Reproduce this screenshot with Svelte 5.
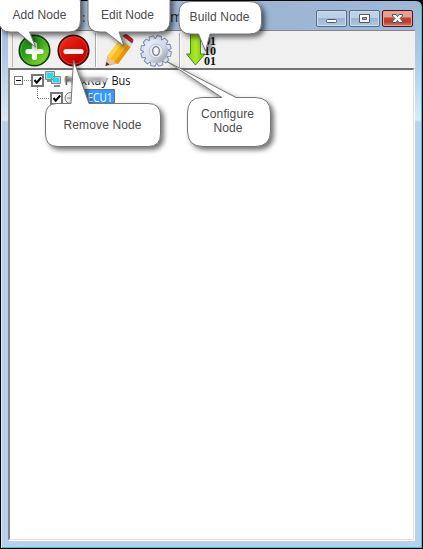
<script>
  const callouts = [
    { d: 'M-2 -10H69Q80.500 -10 80.500 2V20Q80.500 32 69 32H29.500L35.500 47L18 32H10Q-1 32 -1 20V-10Z', lines: [{ t: 'Add Node', x: 12.5, y: 19, w: 54 }] },
    { d: 'M88 -10H170V20Q170 32 158.500 32H119L124 46L106 32H100Q88 32 88 20Z', lines: [{ t: 'Edit Node', x: 101, y: 19, w: 53 }] },
    { d: 'M191 1.500H249Q261.500 1.500 261.500 13V23Q261.500 34 249 34H210L205.500 51L198.500 34H191Q179 34 179 22V13Q179 1.500 191 1.500Z', lines: [{ t: 'Build Node', x: 189.500, y: 21, w: 60 }] },
    { d: 'M57 103.500H71L73.500 60L89 103.500H148Q160.500 103.500 160.500 116V134Q160.500 146.500 148 146.500H58Q45.500 146.500 45.500 134V116Q45.500 103.500 57 103.500Z', lines: [{ t: 'Remove Node', x: 63.500, y: 129, w: 78 }] },
    { d: 'M202 97.500H222L167 61.500L236 97.500H255Q270.500 97.500 270.500 113V131Q270.500 146.500 255 146.500H203Q187.500 146.500 187.500 131V113Q187.500 97.500 202 97.500Z', lines: [{ t: 'Configure', x: 201, y: 118, w: 53 }, { t: 'Node', x: 213.500, y: 132, w: 29 }] }
  ];
  const teeth = Array.from({ length: 12 }, (_, i) => i * 30 + 12);
</script>

<div class="window">
  <header>
    <span class="hint">:</span><span class="hint2">m</span>
    <div class="buttons">
      <button aria-label="Minimize"><svg width="29" height="15"><rect x="9.500" y="8.500" width="10" height="3" rx="1" fill="#fff" stroke="#535967" /></svg></button>
      <button aria-label="Maximize"><svg width="29" height="15"><path d="M9.500 3.500h10v8h-10zM12.500 6.500v2h4v-2z" fill="#fff" fill-rule="evenodd" stroke="#535967" /></svg></button>
      <button class="close" aria-label="Close"><svg width="29" height="15"><path d="M9.500 3.500h3.500l1.500 2 1.500-2h3.500v1.500l-2.500 2.500 2.500 2.500v1.500H16l-1.500-2-1.500 2H9.500V10L12 7.500 9.500 5z" fill="#fff" stroke="#4f5262" /></svg></button>
    </div>
  </header>

  <div class="toolbar">
    <i class="grip"></i>
    <svg class="round" width="33" height="33" viewBox="0 0 33 33">
      <defs>
        <linearGradient id="green" x1="0" y1="0" x2="1" y2="1"><stop stop-color="#0c850c" /><stop offset=".45" stop-color="#32a41b" /><stop offset="1" stop-color="#a5ee22" /></linearGradient>
        <linearGradient id="red" x1="0" y1="0" x2="0.700" y2="1"><stop stop-color="#f5401f" /><stop offset=".45" stop-color="#df1208" /><stop offset="1" stop-color="#b90000" /></linearGradient>
      </defs>
      <circle cx="16.500" cy="16.500" r="15.200" fill="url(#green)" stroke="#123f13" stroke-width="1.700" />
      <circle cx="16.500" cy="16.500" r="13.800" fill="none" stroke="#62bd36" stroke-width=".8" />
      <path d="M16.500 10.500v13M10 17.500h13" stroke="#f5fcf1" stroke-width="5.200" stroke-linecap="round" />
    </svg>
    <svg class="round second" width="33" height="33" viewBox="0 0 33 33">
      <circle cx="16.500" cy="16.500" r="15.200" fill="url(#red)" stroke="#410b08" stroke-width="1.700" />
      <circle cx="16.500" cy="16.500" r="13.800" fill="none" stroke="#ef4930" stroke-width=".8" />
      <path d="M9 17.500h15" stroke="#fff0ed" stroke-width="5.200" stroke-linecap="round" />
    </svg>
    <i class="rule"></i>
    <svg class="pencil" width="30" height="34" viewBox="0 0 30 34">
      <path d="M.5 32L3 21.500 13 29Z" fill="#edc1a2" stroke="#c39478" stroke-width=".5" />
      <path d="M.5 32l1-4 3 2.500z" fill="#333" />
      <path d="M2.500 22L15 5l10.500 8L13 30 9.500 28.500 8 26 5 25.500Z" fill="#f9b81b" />
      <path d="M2.500 22L15 5l3 2.500L5.500 25Z" fill="#ffd24a" />
      <path d="M9.500 28L22.500 11l3 2L13 30Z" fill="#e8960c" />
      <path d="M15 5l3-3.500 10 8L25.500 13Z" fill="#dedede" />
      <path d="M17.500 2Q20-1 22.500 .5L28 5q1 1.500-1 4.500Z" fill="#ad1f2d" />
    </svg>
    <svg class="gear" width="34" height="34" viewBox="-17 -17 34 34">
      <defs><linearGradient id="steel" x1="0" y1="0" x2="1" y2="1"><stop stop-color="#f0f4ff" /><stop offset=".55" stop-color="#d5d9e7" /><stop offset="1" stop-color="#8d909c" /></linearGradient>
      <linearGradient id="edge"><stop stop-color="#7389bf" /><stop offset="1" stop-color="#73757e" /></linearGradient></defs>
      <circle r="12.200" fill="none" stroke="url(#edge)" stroke-width="1.600" />
      {#each teeth as angle}
        <path d="M-3.200 -11.500L-2.200 -15.300H2.200L3.200 -11.500" fill="#dce0ee" stroke="#7f8bad" stroke-width="1" transform="rotate({angle})" />
      {/each}
      <circle r="12.100" fill="url(#steel)" />
      <circle r="6.800" fill="#e7e9f2" stroke="#c2c5d3" />
      <ellipse rx="3.300" ry="4.300" fill="#f5f5f5" stroke="#767986" stroke-width="1.300" />
    </svg>
    <i class="rule next"></i>
    <svg class="build" width="34" height="35" viewBox="0 0 34 35">
      <defs><linearGradient id="arrow"><stop stop-color="#77c818" /><stop offset=".5" stop-color="#aee923" /><stop offset="1" stop-color="#67b711" /></linearGradient></defs>
      <path d="M4.500 -2h10v22H19L9.500 31 0.500 20h4z" fill="url(#arrow)" stroke="#458e15" />
      <text x="18" y="11">01<tspan x="18" y="21">10</tspan><tspan x="18" y="31">01</tspan></text>
    </svg>
  </div>

  <main>
    <svg class="tree" width="180" height="40" viewBox="0 0 180 40">
      <defs><linearGradient id="haze"><stop stop-color="#6a6568" /><stop offset=".35" stop-color="#c8c4c8" /><stop offset=".8" stop-color="#aaa6aa" /><stop offset="1" stop-color="#d8d6d8" /></linearGradient></defs>
      <path d="M14 10.500h8M27.500 17v12M28 28.500h13" stroke="#808080" stroke-dasharray="1 1" fill="none" />
      <rect x="4.500" y="6.500" width="8" height="8" fill="#fff" stroke="#777" /><path d="M6 10.500h5" stroke="#000" />
      {#each [[22, 5], [41, 23]] as [x, y]}
        <rect x={x} y={y} width="11" height="11" fill="#fff" stroke="#777" stroke-width="2" />
        <path d="M{x + 2.500} {y + 5}l2.200 2.700 4.500-5.200" stroke="#000" stroke-width="2" fill="none" />
      {/each}
      <path d="M35.500 1.500h9v8h-9zM41.500 6.500h9v7h-9z" fill="#c5c8ca" stroke="#81878a" />
      <path d="M37 3h6v5h-6zM43 8h6v4h-6z" fill="#08e7ee" /><path d="M37 11h5M44 16h6" stroke="#82888c" stroke-width="2" />
      <circle cx="60.500" cy="28" r="5.500" fill="#eee" stroke="#777" /><path d="M57 28h5" stroke="#888" />
      <rect x="67.500" y="19.500" width="37" height="15" fill="#3399ff" stroke="#301800" stroke-dasharray="1 1" />
      <text x="54.500" y="14.500" textLength="43" lengthAdjust="spacingAndGlyphs">FlexRay</text>
      <text x="101.500" y="14.500" textLength="19" lengthAdjust="spacingAndGlyphs">Bus</text>
      <g class="smudge"><path d="M57 3h39v9H57z" fill="#f8f8f8" /><path d="M55 7h42v5H55z" fill="url(#haze)" /></g>
      <text x="77.500" y="32" textLength="25" lengthAdjust="spacingAndGlyphs" style:fill="#fff">ECU1</text>
    </svg>
  </main>

  <svg class="callouts" width="423" height="160" viewBox="0 0 423 160">
    {#each callouts as c}
      <path class="bubble" d={c.d} />
      {#each c.lines as l}
        <text x={l.x} y={l.y} textLength={l.w}>{l.t}</text>
      {/each}
    {/each}
  </svg>
</div>

<style>
  .window {
    position: relative; box-sizing: border-box; width: 423px; height: 549px;
    display: flex; flex-direction: column; padding: 1px 8px 7px 7px;
    background: linear-gradient(#9db7d4 0, #b0c8e2 55px, #dce9f6 119px, #b9d1ea 121px, #b9d1ea 100%);
    border: 1px solid #050505; border-top-right-radius: 7px;
    box-shadow: inset 1px 0 #dceafa, inset -1px -1px #35c5dc;
  }
  :global(body) { background: #000; overflow: hidden; }
  header { height: 29px; flex: none; display: flex; position: relative; background: linear-gradient(90deg, #b9cee4, #9ab4d2 55%, #9fb9d8); border-bottom: 1px solid #858585; box-sizing: border-box; margin: 0 -1px 0 0; }
  .hint { margin: 6px 0 0 74px; font: 13px "Open Sans", sans-serif; color: #263c64; }
  .hint2 { position: absolute; left: 162px; top: 5px; font: 14px "Open Sans", sans-serif; color: #19263d; }
  .buttons { display: flex; gap: 2px; margin: 8px 2px 0 auto; }
  button { box-sizing: border-box; width: 31px; height: 17px; padding: 0; border: 1px solid #566b86; border-radius: 2px; box-shadow: inset 0 0 0 1px #ccdeef; background: linear-gradient(#bdd1e6 0 45%, #9bb6d2 50%, #b0c8e1); }
  button svg { display: block; }
  .close { border-color: #461522; box-shadow: inset 0 0 0 1px #e9a49a; background: linear-gradient(#e6a091 0 40%, #c74633 46%, #bd3a28 70%, #d77960); }
  .toolbar { flex: none; height: 37px; display: flex; align-items: flex-start; background: #f0f0f0; padding: 3px 0 0 1px; box-sizing: border-box; margin-right: -1px; }
  .grip { width: 1px; height: 33px; margin: 0 4px 0 3px; background: #b9b9b9; }
  .round { margin-left: 1px; flex: none; }
  .second { margin-left: 6px; }
  .rule { width: 1px; height: 34px; background: #aaa; box-shadow: 1px 0 white; margin: -1px 0 0 5px; }
  .pencil { margin: 0 0 0 9px; }
  .gear { margin: 0 0 0 4px; }
  .next { margin-left: 6px; }
  .build { margin: 0 0 0 6px; overflow: visible; }
  .build text { font: bold 12px "Liberation Serif", serif; fill: #111; }
  main { flex: 1; box-sizing: border-box; background: #fff; border: solid; border-width: 2px 1px 1px 2px; border-color: #727272 #e0e0e0 #e0e0e0 #858585; margin: 0 0 1px; box-shadow: 1px 1px #fff; }
  .tree { display: block; }
  .tree text { font: 12px "Open Sans", sans-serif; fill: #111; }
  .smudge { filter: blur(1px); }
  .callouts { position: absolute; left: -1px; top: -1px; pointer-events: none; }
  .bubble { fill: #fff; stroke: #777; stroke-width: 1; filter: drop-shadow(3px 3px 2.500px rgba(0,0,0,.55)); }
  .callouts text { font: 12px "Liberation Sans", Arial, sans-serif; fill: #4b4b4b; }
</style>
